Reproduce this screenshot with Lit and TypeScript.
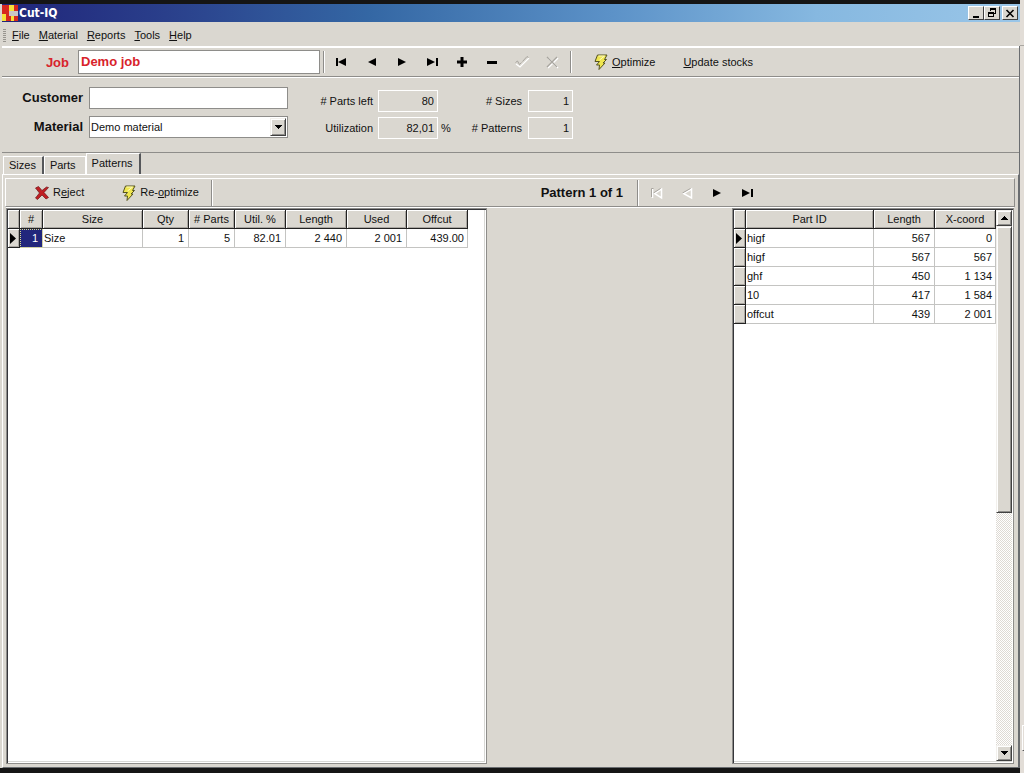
import { LitElement, html, svg, css, nothing } from "lit";
import { customElement, state } from "lit/decorators.js";
import { classMap } from "lit/directives/class-map.js";

const ICONS: Record<string, any> = {
  first: svg`<path d="M2 4h2v8h-2zM12 4v8L4 8z"/>`,
  prev: svg`<path d="M12 4v8L4 8z"/>`,
  next: svg`<path d="M4 4v8L12 8z"/>`,
  last: svg`<path d="M3 4v8L11 8zM12 4h2v8h-2z"/>`,
  plus: svg`<path d="M6.500 3h3v3.500h3.500v3h-3.500v3.500h-3v-3.500h-3.500v-3h3.500z"/>`,
  minus: svg`<path d="M3 7h10v3h-10z"/>`,
  check: svg`<path d="M2 10l4 3 9-9" fill="none" stroke="#fff" stroke-width="1.200"/><path d="M1.500 8.500l2-1.500 2 3.500 2-2M8.500 7.500l4.500-5 1.500 1" fill="none" stroke="#a8a59f"/>`,
  cross: svg`<path d="M4 4l10 10M14 4L4 14" fill="none" stroke="#fff" stroke-width="1.500"/><path d="M3 3l10 10M13 3L3 13" fill="none" stroke="#a8a59f" stroke-width="1.300"/>`,
  firstOff: svg`<path d="M3.500 4v9M12.500 4v9L5.500 8.500z" fill="none" stroke="#fff" stroke-width="1.500"/><path d="M2.500 12V3.500h2M11.500 3.500L4.500 8" fill="none" stroke="#a8a59f"/>`,
  prevOff: svg`<path d="M12.500 4v9L4.500 8.500z" fill="none" stroke="#fff" stroke-width="1.500"/><path d="M11.500 3.500L3.500 8" fill="none" stroke="#a8a59f"/>`,
  bolt: svg`<path d="M4.500 1H14l-2.500 4.500h2l-3.500 3.500h2L6 15.500l.5-4.500H3.500l3-3.500H2z" fill="#efe650" stroke="#55531f"/><path d="M5.500 2h6L6.500 6" fill="none" stroke="#fffcc0"/>`,
  reject: svg`<path d="M1.500 3l3-1.500L8 5.500 12.500 2l2 .5L10 7.500l4.500 5-2.500 1.500L8 10l-4.500 4.500-2-1.500L5.500 8z" fill="#c01f24" stroke="#6d1518" stroke-width=".7"/>`,
};

const icon = (name: string) =>
  html`<svg class="icon" width="16" height="16" viewBox="0 0 16 16" aria-hidden="true">${ICONS[name]}</svg>`;

type Nav = [icon: string, label: string, disabled?: boolean];

const JOB_NAV: Nav[] = [
  ["first", "First job"],
  ["prev", "Previous job"],
  ["next", "Next job"],
  ["last", "Last job"],
  ["plus", "Add job"],
  ["minus", "Delete job"],
  ["check", "Save", true],
  ["cross", "Cancel", true],
];

const PATTERN_NAV: Nav[] = [
  ["firstOff", "First pattern", true],
  ["prevOff", "Previous pattern", true],
  ["next", "Next pattern"],
  ["last", "Last pattern"],
];

interface Column {
  title: string;
  width: number;
  text?: boolean;
}

const PATTERN_COLUMNS: Column[] = [
  { title: "#", width: 23 },
  { title: "Size", width: 100, text: true },
  { title: "Qty", width: 46 },
  { title: "# Parts", width: 46 },
  { title: "Util. %", width: 51 },
  { title: "Length", width: 61 },
  { title: "Used", width: 60 },
  { title: "Offcut", width: 61 },
];
const PATTERN_ROWS = [["1", "Size", "1", "5", "82.01", "2 440", "2 001", "439.00"]];

const PART_COLUMNS: Column[] = [
  { title: "Part ID", width: 128, text: true },
  { title: "Length", width: 61 },
  { title: "X-coord", width: 61 },
];
const PART_ROWS = [
  ["higf", "567", "0"],
  ["higf", "567", "567"],
  ["ghf", "450", "1 134"],
  ["10", "417", "1 584"],
  ["offcut", "439", "2 001"],
];

@customElement("app-root")
export class AppRoot extends LitElement {
  @state() private tab = "Patterns";

  static styles = css`
    :host {
      --face: #dad7d0;
      --shade: #8e8d8a;
      display: flex;
      height: 100vh;
      background: #e2ddd7;
      color: #111;
      font: 11px/13px "Liberation Sans", Arial, sans-serif;
      overflow: hidden;
    }
    * {
      box-sizing: border-box;
    }
    button,
    input,
    select {
      font: inherit;
      color: inherit;
      margin: 0;
      border-radius: 0;
    }
    .window {
      flex: 1;
      min-width: 0;
      display: flex;
      flex-direction: column;
      border-top: 4px solid #151515;
      border-bottom: 5px solid #151515;
      background: var(--face);
    }
    .behind {
      width: 4px;
      padding-top: 45px;
      display: flex;
      flex-direction: column;
      justify-content: space-between;
    }
    .behind::before {
      content: "";
      height: 1px;
      background: #aaa7a2;
    }
    .behind-edge {
      height: 26px;
      margin: 0 0 22px 2px;
      border: 1px solid #fff;
      border-right: 0;
      border-bottom-color: #555;
    }
    .title {
      height: 18px;
      margin-left: 2px;
      padding-right: 2px;
      display: flex;
      align-items: center;
      background: linear-gradient(90deg, #20257a 0%, #2a3f8b 16%, #3467a4 36%, #5c92c8 60%, #86b8e0 80%, #9ac6e8 100%);
      color: #fff;
    }
    .title h1 {
      flex: 1;
      margin: 0 0 0 1px;
      font: bold 12px/16px "DejaVu Sans Condensed", "DejaVu Sans", sans-serif;
    }
    .caption {
      width: 16px;
      height: 14px;
      padding: 0;
      display: grid;
      place-items: center;
      background: var(--face);
      border: 1px solid;
      border-color: #fff #404040 #404040 #fff;
      color: #000;
    }
    .close {
      margin-left: 2px;
    }
    .menu {
      height: 24px;
      padding: 2px 0 0 3px;
      display: flex;
      align-items: center;
      gap: 1px;
    }
    .grip {
      width: 3px;
      height: 13px;
      margin-right: 1px;
      background: repeating-linear-gradient(#98958f 0 1px, transparent 1px 2px);
    }
    .menu button,
    .command {
      border: 0;
      background: none;
      white-space: nowrap;
    }
    .menu button {
      padding: 0 4px;
    }
    u {
      text-decoration: underline;
      text-underline-offset: 1px;
    }
    .body {
      flex: 1;
      min-height: 0;
      display: flex;
      flex-direction: column;
      margin-left: 2px;
      border-right: 1px solid #6a6d70;
    }
    .bar {
      display: flex;
      align-items: center;
    }
    .job-bar {
      height: 31px;
      border-top: 2px solid #fff;
      border-bottom: 1px solid var(--shade);
    }
    .strong {
      font-size: 13px;
      line-height: 16px;
      font-weight: bold;
    }
    .job-bar label {
      width: 67px;
      margin-right: 9px;
      padding-top: 2px;
      text-align: right;
      color: #d8232b;
    }
    .field {
      border: 1px solid var(--shade);
      background: #fff;
      padding: 0 1px;
      outline: 0;
    }
    .job-input {
      width: 242px;
      height: 24px;
      padding: 0 2px 2px;
      color: #d8232b;
    }
    .sep {
      width: 2px;
      height: 22px;
      border-left: 1px solid var(--shade);
      border-right: 1px solid #fff;
    }
    .nav {
      display: flex;
    }
    .job-input + .sep {
      margin-left: 3px;
    }
    .job-bar .nav {
      padding: 0 3px 0 2px;
    }
    .nav button {
      width: 30px;
      height: 22px;
      padding: 0;
      border: 0;
      background: none;
      display: grid;
      place-items: center;
    }
    .icon {
      display: block;
      flex: none;
    }
    .command {
      display: flex;
      align-items: center;
      gap: 3px;
      padding: 0;
    }
    .job-bar .command {
      margin-left: 21px;
    }
    .job-bar .command + .command {
      margin-left: 28px;
    }
    .details {
      display: flex;
      align-items: flex-start;
      gap: 31px;
      height: 76px;
      padding-top: 9px;
      border-top: 1px solid #fff;
      border-bottom: 1px solid var(--shade);
    }
    .form {
      display: grid;
      grid-template-columns: 81px 199px;
      grid-auto-rows: 22px;
      gap: 7px 6px;
      align-items: center;
    }
    .form label {
      text-align: right;
    }
    .form .field {
      width: 100%;
      height: 22px;
    }
    .combo {
      position: relative;
    }
    .combo select {
      display: block;
      appearance: none;
    }
    .drop {
      position: absolute;
      top: 2px;
      right: 2px;
      width: 16px;
      height: 18px;
      pointer-events: none;
    }
    .stats {
      display: grid;
      grid-template-columns: 56px 60px 84px 45px;
      grid-auto-rows: 22px;
      gap: 5px 3px;
      align-items: center;
      padding-top: 3px;
    }
    .stats label {
      padding-right: 2px;
      text-align: right;
      white-space: nowrap;
    }
    .stats .pair {
      display: flex;
      justify-content: space-between;
    }
    .stats .pair label {
      flex: 1;
      padding-right: 3px;
    }
    .stats input {
      width: 100%;
      height: 22px;
      padding: 0 3px;
      border: 1px solid #fff;
      background: none;
      text-align: right;
    }
    .tabs {
      height: 21px;
      padding-left: 1px;
      display: flex;
      align-items: flex-end;
    }
    .tabs button {
      height: 18px;
      padding: 0 6px 0 5px;
      border: 1px solid #fff;
      border-bottom: 0;
      border-right: 2px solid #55575a;
      background: none;
    }
    .tabs .before {
      padding-right: 9px;
      border-right: 1px solid #fff;
    }
    .tabs .on {
      height: 21px;
      padding-bottom: 2px;
    }
    .page {
      flex: 1;
      min-height: 0;
      display: flex;
      flex-direction: column;
      padding: 3px 3px 3px 2px;
      border: 1px solid #fff;
      border-right-color: #6a6d70;
      border-bottom: 1px solid #6a6d70;
    }
    .pattern-bar {
      height: 29px;
      border: 1px solid #fff;
      border-right-color: var(--shade);
      border-bottom-color: var(--shade);
    }
    .reject {
      margin: 0 37px 0 28px;
    }
    .pattern-bar .sep {
      height: 26px;
    }
    .count {
      flex: 1;
      margin: 0 14px 0 0;
      text-align: right;
    }
    .pattern-bar .command + .sep {
      margin-left: 12px;
    }
    .pattern-bar .nav {
      padding: 0 252px 0 3px;
    }
    .panes {
      flex: 1;
      min-height: 0;
      display: grid;
      grid-template-columns: minmax(0, 481fr) minmax(0, 245fr) 282px;
      margin: 0 1px;
      border-top: 1px solid #fff;
    }
    .pane {
      display: flex;
      min-width: 0;
      background: #fff;
      border: 1px solid var(--shade);
      box-shadow: inset 1px 1px #35363a, inset -1px -1px #fff, inset -2px -2px #d8d8d5;
      padding: 1px 2px 2px 1px;
    }
    .right {
      grid-column: 3;
      justify-content: space-between;
    }
    table {
      table-layout: fixed;
      border-collapse: separate;
      border-spacing: 0;
      width: 0;
      align-self: flex-start;
    }
    th,
    td {
      height: 19px;
      padding: 0 4px;
      font-weight: normal;
      text-align: right;
      white-space: nowrap;
      border: 0 solid #c4c4c2;
      border-width: 0 1px 1px 0;
    }
    td:last-child {
      padding-right: 3px;
    }
    th {
      padding: 0;
      text-align: center;
    }
    th,
    .marker {
      background: var(--face);
      border-color: #222;
      box-shadow: inset 1px 1px #fff, inset -1px -1px #aaa7a2;
    }
    .marker {
      padding: 0 0 0 2px;
    }
    .marker svg {
      display: block;
    }
    .text {
      padding-left: 1px;
      text-align: left;
    }
    .selected {
      background: #22267c;
      color: #fff;
      outline: 1px dotted #d9d98c;
      outline-offset: -1px;
    }
    .scroll {
      width: 16px;
      display: flex;
      flex-direction: column;
      background: repeating-conic-gradient(#fff 0 25%, #dedad4 0 50%) 0 0 / 2px 2px;
    }
    .scroll .track {
      flex: 1;
    }
    .bevel {
      padding: 0;
      display: grid;
      place-items: center;
      background: var(--face);
      border: 1px solid;
      border-color: #f2f0ec #404040 #404040 #f2f0ec;
      box-shadow: inset 1px 1px #fff, inset -1px -1px var(--shade);
    }
    .scroll button {
      width: 16px;
      height: 16px;
    }
  `;

  private nav(items: Nav[]) {
    return html`<div class="nav">
      ${items.map(
        ([name, label, disabled]) =>
          html`<button aria-label=${label} ?disabled=${disabled}>${icon(name)}</button>`
      )}
    </div>`;
  }

  private arrow(up: boolean) {
    return html`<svg width="7" height="4" viewBox="0 0 7 4" shape-rendering="crispEdges">
      <path d=${up ? "M0 4h7L3.500 0z" : "M0 0h7L3.500 4z"} />
    </svg>`;
  }

  private grid(label: string, columns: Column[], rows: string[][], select = false) {
    return html`<table aria-label=${label}>
      <colgroup>
        <col style="width:12px" />
        ${columns.map((c) => html`<col style="width:${c.width}px" />`)}
      </colgroup>
      <thead>
        <tr>
          <th></th>
          ${columns.map((c) => html`<th scope="col">${c.title}</th>`)}
        </tr>
      </thead>
      <tbody>
        ${rows.map(
          (row, r) => html`<tr>
            <td class="marker">
              ${r === 0
                ? html`<svg width="6" height="11" viewBox="0 0 6 11"><path d="M0 0v11l6-5.500z" /></svg>`
                : nothing}
            </td>
            ${row.map(
              (value, i) =>
                html`<td class=${classMap({ text: !!columns[i].text, selected: select && r === 0 && i === 0 })}>${value}</td>`
            )}
          </tr>`
        )}
      </tbody>
    </table>`;
  }

  render() {
    const tabs = ["Sizes", "Parts", "Patterns"];
    return html`
      <div class="window">
        <header class="title">
          <svg width="16" height="16" viewBox="0 0 16 16" shape-rendering="crispEdges" aria-hidden="true">
            <path fill="#d6281f" d="M0 0h16v16H0z" />
            <path fill="#f5e13a" d="M7 0h5v6H7zM0 9h4v7H0zM9 11h3v5H9z" />
            <path fill="#c9c6c6" d="M7 6h9v5H7z" />
          </svg>
          <h1>Cut-IQ</h1>
          <button class="caption" aria-label="Minimize">
            <svg width="10" height="9" viewBox="0 0 10 9"><path d="M2 7h6v2H2z" /></svg>
          </button>
          <button class="caption" aria-label="Restore">
            <svg width="10" height="10" viewBox="0 0 10 10" fill="none" stroke="#000" shape-rendering="crispEdges">
              <path d="M3.500 3V.5h5v5H7M3 1.500h6M1.500 4.500h5v4h-5zM1 5.500h6" />
            </svg>
          </button>
          <button class="caption close" aria-label="Close">
            <svg width="10" height="9" viewBox="0 0 10 9"><path d="M1.500 1l7 7M8.500 1l-7 7" stroke="#000" stroke-width="1.600" /></svg>
          </button>
        </header>
        <nav class="menu">
          <span class="grip"></span>
          <button><u>F</u>ile</button>
          <button><u>M</u>aterial</button>
          <button><u>R</u>eports</button>
          <button><u>T</u>ools</button>
          <button><u>H</u>elp</button>
        </nav>
        <main class="body">
          <div class="bar job-bar">
            <label class="strong" for="job">Job</label>
            <input class="field job-input strong" id="job" value="Demo job" />
            <span class="sep"></span>
            ${this.nav(JOB_NAV)}
            <span class="sep"></span>
            <button class="command">${icon("bolt")}<span><u>O</u>ptimize</span></button>
            <button class="command"><span><u>U</u>pdate stocks</span></button>
          </div>
          <section class="details">
            <div class="form">
              <label class="strong" for="customer">Customer</label>
              <input class="field" id="customer" />
              <label class="strong" for="material">Material</label>
              <div class="combo">
                <select class="field" id="material">
                  <option>Demo material</option>
                </select>
                <span class="bevel drop">${this.arrow(false)}</span>
              </div>
            </div>
            <div class="stats">
              <label for="left"># Parts left</label>
              <input id="left" readonly value="80" />
              <div class="pair"><label for="sizes"># Sizes</label></div>
              <input id="sizes" readonly value="1" />
              <label for="util">Utilization</label>
              <input id="util" readonly value="82,01" />
              <div class="pair"><span>%</span><label for="patterns"># Patterns</label></div>
              <input id="patterns" readonly value="1" />
            </div>
          </section>
          <div class="tabs" role="tablist">
            ${tabs.map(
              (name, i) => html`<button
                role="tab"
                aria-selected=${this.tab === name}
                class=${classMap({ on: this.tab === name, before: tabs[i + 1] === this.tab })}
                @click=${() => (this.tab = name)}
              >
                ${name}
              </button>`
            )}
          </div>
          <section class="page">
            <div class="bar pattern-bar">
              <button class="command reject">${icon("reject")}<span>R<u>e</u>ject</span></button>
              <button class="command">${icon("bolt")}<span>Re-<u>o</u>ptimize</span></button>
              <span class="sep"></span>
              <h2 class="strong count">Pattern 1 of 1</h2>
              <span class="sep"></span>
              ${this.nav(PATTERN_NAV)}
            </div>
            <div class="panes">
              <div class="pane">${this.grid("Patterns", PATTERN_COLUMNS, PATTERN_ROWS, true)}</div>
              <div class="pane right">
                ${this.grid("Parts in pattern", PART_COLUMNS, PART_ROWS)}
                <div class="scroll">
                  <button class="bevel" aria-label="Scroll up">${this.arrow(true)}</button>
                  <div class="track"><div class="bevel" style="height:55.3%"></div></div>
                  <button class="bevel" aria-label="Scroll down">${this.arrow(false)}</button>
                </div>
              </div>
            </div>
          </section>
        </main>
      </div>
      <div class="behind"><span class="behind-edge"></span></div>
    `;
  }
}
